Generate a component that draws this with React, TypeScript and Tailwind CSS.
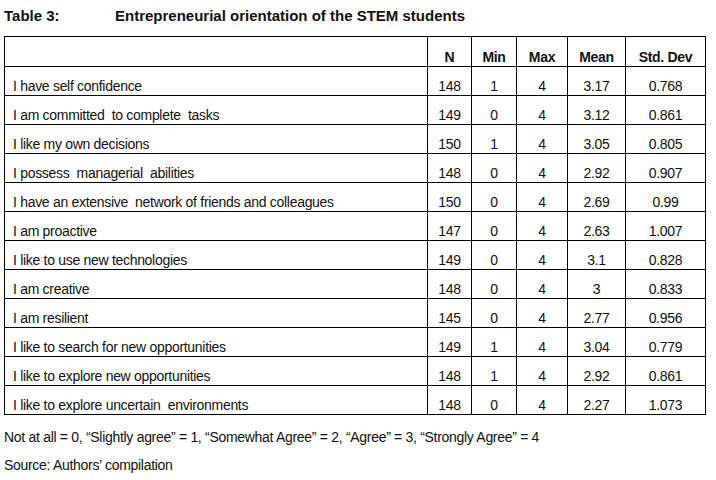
const rows: [string, string, string, string, string, string][] = [
  ["I have self confidence", "148", "1", "4", "3.17", "0.768"],
  ["I am committed  to complete  tasks", "149", "0", "4", "3.12", "0.861"],
  ["I like my own decisions", "150", "1", "4", "3.05", "0.805"],
  ["I possess  managerial  abilities", "148", "0", "4", "2.92", "0.907"],
  ["I have an extensive  network of friends and colleagues", "150", "0", "4", "2.69", "0.99"],
  ["I am proactive", "147", "0", "4", "2.63", "1.007"],
  ["I like to use new technologies", "149", "0", "4", "3.1", "0.828"],
  ["I am creative", "148", "0", "4", "3", "0.833"],
  ["I am resilient", "145", "0", "4", "2.77", "0.956"],
  ["I like to search for new opportunities", "149", "1", "4", "3.04", "0.779"],
  ["I like to explore new opportunities", "148", "1", "4", "2.92", "0.861"],
  ["I like to explore uncertain  environments", "148", "0", "4", "2.27", "1.073"],
];

const widths = ["w-[423px]", "w-[44px]", "w-[45px]", "w-[51px]", "w-[58px]", "w-[80px]"];
const headers = ["", "N", "Min", "Max", "Mean", "Std. Dev"];

export default function App() {
  return (
    <div
      className="w-[716px] h-[480px] bg-white text-[#111] overflow-hidden"
      style={{ fontFamily: '"Liberation Sans", Arial, sans-serif' }}
    >
      {/* Caption */}
      <div className="flex pl-[4px] pt-[7px] h-[36px] text-[15px] font-bold leading-[18px]">
        <span className="w-[111px]">Table 3:</span>
        <span>Entrepreneurial orientation of the STEM students</span>
      </div>

      {/* Table */}
      <div className="ml-[4px] w-[702px] border-l border-t border-black text-[14px] tracking-[-0.3px] leading-[16px]">
        <div className="flex h-[30px]">
          {headers.map((h, i) => (
            <div
              key={i}
              className={`${widths[i]} flex items-end justify-center pb-[1px] border-r border-b border-black font-bold`}
            >
              {h}
            </div>
          ))}
        </div>
        {rows.map((r) => (
          <div key={r[0]} className="flex h-[29px]">
            {r.map((c, i) => (
              <div
                key={i}
                className={`${widths[i]} flex items-end pb-[1px] border-r border-b border-black whitespace-pre ${
                  i === 0 ? "pl-[8px]" : "justify-center"
                }`}
              >
                {c}
              </div>
            ))}
          </div>
        ))}
      </div>

      {/* Notes */}
      <div className="pl-[4px] pt-[14px] text-[14px] tracking-[-0.3px] leading-[16px]">
        <p>Not at all = 0, “Slightly agree” = 1, “Somewhat Agree” = 2, “Agree” = 3, “Strongly Agree” = 4</p>
        <p className="mt-[12px]">Source:  Authors’ compilation</p>
      </div>
    </div>
  );
}
